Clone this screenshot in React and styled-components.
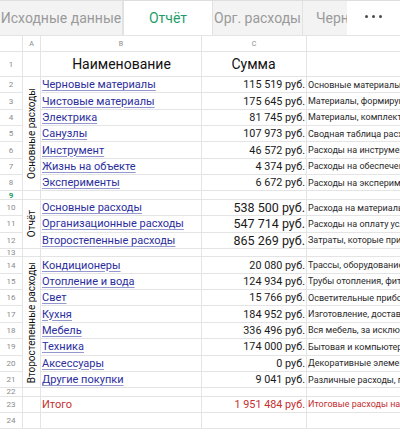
import React from "react";
import styled, { createGlobalStyle } from "styled-components";

const Global = createGlobalStyle`
  html, body {
    margin: 0;
    padding: 0;
    background: #ffffff;
    overflow: hidden;
  }
  body {
    font-family: Roboto, "Noto Sans", sans-serif;
  }
`;

const Page = styled.div`
  width: 400px;
  height: 433px;
  overflow: hidden;
  background: #ffffff;
`;

const TabBar = styled.div`
  position: relative;
  height: 35px;
  display: flex;
  background: #f3f3f3;
  border-top: 1px solid #dedede;
  box-sizing: border-box;
  overflow: hidden;
`;

const Tab = styled.div`
  flex: none;
  width: ${(p) => p.w}px;
  padding-left: ${(p) => p.pad || 0}px;
  box-sizing: border-box;
  display: flex;
  align-items: center;
  justify-content: ${(p) => (p.pad ? "flex-start" : "center")};
  font-size: 14px;
  white-space: nowrap;
  overflow: hidden;
  color: ${(p) => (p.active ? "#1f9d68" : "#9a9a9a")};
  background: ${(p) => (p.active ? "#ffffff" : "transparent")};
  border-right: 1px solid #e2e2e2;
  border-left: ${(p) => (p.active ? "1px solid #e2e2e2" : "none")};
`;

const MoreButton = styled.div`
  position: absolute;
  top: -1px;
  right: 0;
  width: 53px;
  height: 35px;
  background: #ffffff;
  display: flex;
  align-items: center;
  justify-content: center;
  gap: 4px;
  padding-bottom: 3px;
  box-sizing: border-box;
`;

const Dot = styled.span`
  width: 3px;
  height: 3px;
  border-radius: 50%;
  background: #4a4a4a;
`;

const Sheet = styled.div`
  display: grid;
  grid-template-columns: 23px 18px 161px 105px 1fr;
  grid-template-rows: ${(p) => p.rows};
  border-top: 1px solid #e4e4e4;
`;

const Cell = styled.div`
  box-sizing: border-box;
  border-right: 1px solid #e4e4e4;
  border-bottom: 1px solid #e4e4e4;
  overflow: hidden;
  white-space: nowrap;
  display: flex;
  align-items: center;
  min-width: 0;
`;

const ColHead = styled(Cell)`
  justify-content: center;
  font-size: 7px;
  color: #8a8a8a;
  border-right: ${(p) => (p.last ? "none" : "1px solid #e4e4e4")};
`;

const RowNum = styled(Cell)`
  grid-column: 1;
  justify-content: center;
  font-size: 8px;
  color: ${(p) => (p.current ? "#1f9d68" : "#8a8a8a")};
  font-weight: ${(p) => (p.current ? 700 : 400)};
`;

const Group = styled(Cell)`
  grid-column: 2;
  grid-row: span ${(p) => p.span};
  justify-content: center;
`;

const GroupLabel = styled.span`
  writing-mode: vertical-rl;
  transform: rotate(180deg);
  font-size: 10px;
  color: #111;
`;

const Blank = styled(Cell)`
  grid-column: 2;
`;

const NameCell = styled(Cell)`
  grid-column: 3;
  padding-left: 1px;
  justify-content: ${(p) => (p.head ? "center" : "flex-start")};
`;

const SumCell = styled(Cell)`
  grid-column: 4;
  padding-right: 1px;
  justify-content: ${(p) => (p.head ? "center" : "flex-end")};
  font-size: ${(p) => (p.big ? 12.5 : 10.8)}px;
  color: ${(p) => (p.total ? "#c43030" : "#1a1a1a")};
`;

const NoteCell = styled(Cell)`
  grid-column: 5;
  border-right: none;
  padding-left: 1px;
  font-size: 9px;
  color: ${(p) => (p.total ? "#c43030" : "#2a2a2a")};
`;

const Heading = styled.span`
  font-size: 14px;
  color: #111;
`;

const SheetLink = styled.a`
  font-size: 11px;
  color: #2b2e9e;
  text-decoration: underline;
  text-decoration-color: #9597cf;
  text-underline-offset: 2px;
`;

const Total = styled.span`
  font-size: 11px;
  color: #c43030;
`;

const SMALL = 8.5;
const NORMAL = 16.35;

const rows = [
  { n: 1, h: 25, head: true, b: "Наименование", c: "Сумма" },
  { n: 2, b: "Черновые материалы", c: "115 519 руб.", d: "Основные материалы для черновой отделки", group: { span: 7, label: "Основные расходы" } },
  { n: 3, b: "Чистовые материалы", c: "175 645 руб.", d: "Материалы, формирующие чистовую отделку" },
  { n: 4, b: "Электрика", c: "81 745 руб.", d: "Материалы, комплектующие для электрики" },
  { n: 5, b: "Санузлы", c: "107 973 руб.", d: "Сводная таблица расходов на санузлы" },
  { n: 6, b: "Инструмент", c: "46 572 руб.", d: "Расходы на инструмент" },
  { n: 7, b: "Жизнь на объекте", c: "4 374 руб.", d: "Расходы на обеспечение жизни на объекте" },
  { n: 8, b: "Эксперименты", c: "6 672 руб.", d: "Расходы на эксперименты" },
  { n: 9, small: true, current: true },
  { n: 10, big: true, b: "Основные расходы", c: "538 500 руб.", d: "Расхода на материалы и работы", group: { span: 3, label: "Отчёт" } },
  { n: 11, big: true, b: "Организационные расходы", c: "547 714 руб.", d: "Расходы на оплату услуг" },
  { n: 12, big: true, b: "Второстепенные расходы", c: "865 269 руб.", d: "Затраты, которые приходятся" },
  { n: 13, small: true },
  { n: 14, b: "Кондиционеры", c: "20 080 руб.", d: "Трассы, оборудование, монтаж", group: { span: 8, label: "Второстепенные расходы" } },
  { n: 15, b: "Отопление и вода", c: "124 934 руб.", d: "Трубы отопления, фитинги" },
  { n: 16, b: "Свет", c: "15 766 руб.", d: "Осветительные приборы" },
  { n: 17, b: "Кухня", c: "184 952 руб.", d: "Изготовление, доставка" },
  { n: 18, b: "Мебель", c: "336 496 руб.", d: "Вся мебель, за исключением" },
  { n: 19, b: "Техника", c: "174 000 руб.", d: "Бытовая и компьютерная техника" },
  { n: 20, b: "Аксессуары", c: "0 руб.", d: "Декоративные элементы" },
  { n: 21, b: "Другие покупки", c: "9 041 руб.", d: "Различные расходы, покупки" },
  { n: 22, small: true },
  { n: 23, total: true, b: "Итого", c: "1 951 484 руб.", d: "Итоговые расходы на ремонт" },
  { n: 24 },
];

const template = ["16px"]
  .concat(rows.map((r) => (r.h ? r.h : r.small ? SMALL : NORMAL) + "px"))
  .join(" ");

const ungrouped = new Set([1, 9, 13, 22, 23, 24]);

function Row({ r }) {
  return (
    <>
      <RowNum current={r.current}>{r.n}</RowNum>
      {r.group && (
        <Group span={r.group.span}>
          <GroupLabel>{r.group.label}</GroupLabel>
        </Group>
      )}
      {ungrouped.has(r.n) && <Blank />}
      <NameCell head={r.head}>
        {r.head && <Heading>{r.b}</Heading>}
        {r.total && <Total>{r.b}</Total>}
        {!r.head && !r.total && r.b && <SheetLink href="#">{r.b}</SheetLink>}
      </NameCell>
      <SumCell head={r.head} big={r.big} total={r.total}>
        {r.head ? <Heading>{r.c}</Heading> : r.c}
      </SumCell>
      <NoteCell total={r.total}>{r.d}</NoteCell>
    </>
  );
}

export default function App() {
  return (
    <Page>
      <Global />
      <TabBar>
        <Tab w={123}>Исходные данные</Tab>
        <Tab w={90} active>
          Отчёт
        </Tab>
        <Tab w={90}>Орг. расходы</Tab>
        <Tab w={140} pad={13}>
          Черновые материалы
        </Tab>
        <MoreButton>
          <Dot />
          <Dot />
          <Dot />
        </MoreButton>
      </TabBar>
      <Sheet rows={template}>
        <ColHead />
        <ColHead>A</ColHead>
        <ColHead>B</ColHead>
        <ColHead>C</ColHead>
        <ColHead last />
        {rows.map((r) => (
          <Row key={r.n} r={r} />
        ))}
      </Sheet>
    </Page>
  );
}
